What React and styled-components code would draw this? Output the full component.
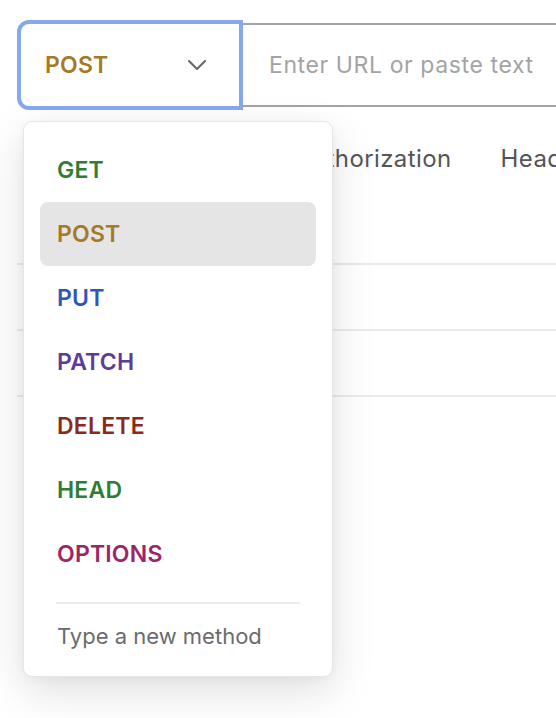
import React from "react";
import styled, { createGlobalStyle } from "styled-components";

const GlobalStyle = createGlobalStyle`
  html, body {
    margin: 0;
    padding: 0;
    background: #ffffff;
    overflow: hidden;
  }
  body {
    font-family: Inter, "Noto Sans", "Liberation Sans", sans-serif;
    -webkit-font-smoothing: antialiased;
  }
  * { box-sizing: border-box; }
`;

const METHOD_COLORS = {
  GET: "#2f7d35",
  POST: "#a57a22",
  PUT: "#2c56bf",
  PATCH: "#5c3b9c",
  DELETE: "#8b2a1c",
  HEAD: "#2f7d35",
  OPTIONS: "#9d2565",
};

const Page = styled.div`
  position: relative;
  width: 556px;
  height: 718px;
  overflow: hidden;
  padding-top: 20px;
`;

const RequestBar = styled.div`
  display: flex;
  align-items: center;
  padding-left: 17px;
  width: 800px;
`;

const MethodSelect = styled.button`
  width: 226px;
  height: 90px;
  flex: none;
  display: flex;
  align-items: center;
  justify-content: space-between;
  padding: 0 33px 0 24px;
  background: #fff;
  border: 4px solid #86a9ee;
  border-radius: 12px 0 0 12px;
  font-family: inherit;
  cursor: pointer;
`;

const MethodLabel = styled.span`
  font-size: 23px;
  font-weight: 600;
  letter-spacing: 0.2px;
  color: ${(p) => METHOD_COLORS[p.$method]};
`;

const UrlInput = styled.div`
  flex: 1;
  height: 84px;
  display: flex;
  align-items: center;
  padding-left: 26px;
  border: 2px solid #a4a4a4;
  border-left: none;
  font-size: 23px;
  letter-spacing: 0.6px;
  color: #a3a3a3;
  white-space: nowrap;
`;

const TabBar = styled.div`
  display: flex;
  align-items: center;
  gap: 49px;
  height: 64px;
  margin-top: 16px;
  padding-left: 186px;
  white-space: nowrap;
`;

const Tab = styled.span`
  font-size: 24px;
  letter-spacing: 0.4px;
  color: #555555;
`;

const Table = styled.div`
  margin-top: 9px;
  margin-left: 17px;
`;

const Row = styled.div`
  height: 66px;
  border-bottom: 2px solid #ebebeb;
`;

const Menu = styled.div`
  position: absolute;
  top: 121px;
  left: 23px;
  width: 310px;
  padding: 16px 16px 8px;
  background: #fff;
  border: 1px solid #e6e6e6;
  border-radius: 9px;
  box-shadow: 0 14px 44px rgba(0, 0, 0, 0.13), 0 2px 8px rgba(0, 0, 0, 0.04);
`;

const MenuItem = styled.div`
  height: 64px;
  display: flex;
  align-items: center;
  padding-left: 17px;
  border-radius: 8px;
  background: ${(p) => (p.$active ? "#e5e5e5" : "transparent")};
`;

const Divider = styled.div`
  height: 2px;
  margin: 16px 16px 0;
  background: #ebebeb;
`;

const NewMethod = styled.div`
  height: 64px;
  display: flex;
  align-items: center;
  padding-left: 17px;
  font-size: 22px;
  color: #6b6b6b;
`;

const Chevron = () => (
  <svg width="18" height="10" viewBox="0 0 18 10" fill="none">
    <path d="M1 1 L9 9 L17 1" stroke="#666" strokeWidth="2" strokeLinecap="round" strokeLinejoin="round" />
  </svg>
);

const methods = ["GET", "POST", "PUT", "PATCH", "DELETE", "HEAD", "OPTIONS"];

export default function App() {
  return (
    <>
      <GlobalStyle />
      <Page>
        <RequestBar>
          <MethodSelect>
            <MethodLabel $method="POST">POST</MethodLabel>
            <Chevron />
          </MethodSelect>
          <UrlInput>Enter URL or paste text</UrlInput>
        </RequestBar>
        <TabBar>
          <Tab>Body</Tab>
          <Tab>Authorization</Tab>
          <Tab>Headers</Tab>
        </TabBar>
        <Table>
          <Row />
          <Row />
          <Row />
        </Table>
        <Menu>
          {methods.map((m) => (
            <MenuItem key={m} $active={m === "POST"}>
              <MethodLabel $method={m}>{m}</MethodLabel>
            </MenuItem>
          ))}
          <Divider />
          <NewMethod>Type a new method</NewMethod>
        </Menu>
      </Page>
    </>
  );
}
